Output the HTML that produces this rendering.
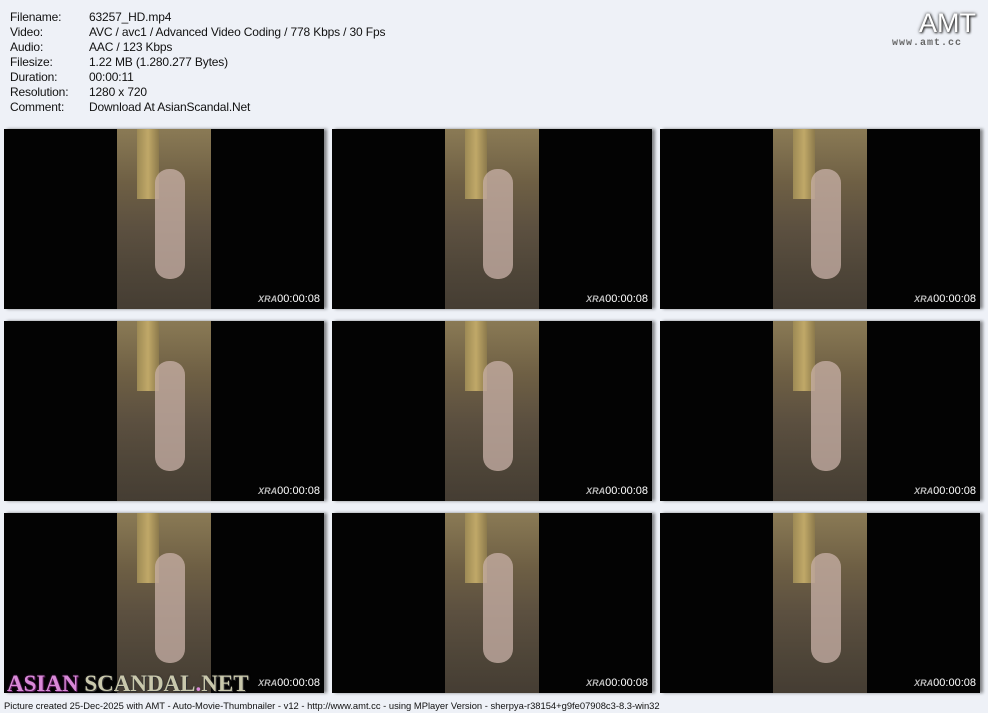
<!DOCTYPE html>
<html><head><meta charset="utf-8"><style>
body{margin:0;width:988px;height:713px;background:#eef1f7;position:relative;overflow:hidden;font-family:"Liberation Sans",sans-serif;}
.info{position:absolute;left:10px;top:10px;font-size:12px;line-height:15px;color:#111;letter-spacing:-0.15px}
.info div{white-space:nowrap}
.info span{display:inline-block;width:79px}
.t{position:absolute;width:320px;height:180px;background:#030303;box-shadow:3px 0 3px rgba(0,0,0,.45);}
.t .c{position:absolute;left:113px;top:0;width:94px;height:180px;background:linear-gradient(180deg,#8a7a55 0%,#6e5f44 30%,#5c5040 55%,#4e4538 80%,#453d33 100%);}
.t .c:before{content:"";position:absolute;left:20px;top:0;width:22px;height:70px;background:linear-gradient(90deg,#9d8a55,#c0a868,#8c7a4c);}
.t .c:after{content:"";position:absolute;left:38px;top:40px;width:30px;height:110px;border-radius:14px;background:#c9b2a8;opacity:.75}
.t .tm{position:absolute;right:4px;bottom:4px;color:#fff;font-size:11px;}
.t .tm i{color:#bbb;font-size:9px;font-weight:bold;}
.amt{position:absolute;left:919px;top:8px;font-size:27px;color:#fff;text-shadow:0 0 3px #333,1px 1px 2px #222;}
.amtu{position:absolute;left:892px;top:38px;font-size:10px;font-weight:bold;color:#666;letter-spacing:1px;font-family:"Liberation Mono",monospace}
.logo{position:absolute;left:7px;top:671px;font-family:"Liberation Serif",serif;font-weight:bold;font-size:23px;letter-spacing:0px;white-space:nowrap}
.foot{position:absolute;left:4px;top:700px;font-size:9.4px;color:#111;white-space:nowrap}
</style></head><body>
<div class="info">
<div><span>Filename:</span>63257_HD.mp4</div>
<div><span>Video:</span>AVC / avc1 / Advanced Video Coding / 778 Kbps / 30 Fps</div>
<div><span>Audio:</span>AAC / 123 Kbps</div>
<div><span>Filesize:</span>1.22 MB (1.280.277 Bytes)</div>
<div><span>Duration:</span>00:00:11</div>
<div><span>Resolution:</span>1280 x 720</div>
<div><span>Comment:</span>Download At AsianScandal.Net</div>
</div>
<div class="amt">AMT</div>
<div class="amtu">www.amt.cc</div>

<div class="t" style="left:4px;top:129px"><div class="c"></div><div class="tm"><i>XRA</i>00:00:08</div></div>
<div class="t" style="left:332px;top:129px"><div class="c"></div><div class="tm"><i>XRA</i>00:00:08</div></div>
<div class="t" style="left:660px;top:129px"><div class="c"></div><div class="tm"><i>XRA</i>00:00:08</div></div>
<div class="t" style="left:4px;top:321px"><div class="c"></div><div class="tm"><i>XRA</i>00:00:08</div></div>
<div class="t" style="left:332px;top:321px"><div class="c"></div><div class="tm"><i>XRA</i>00:00:08</div></div>
<div class="t" style="left:660px;top:321px"><div class="c"></div><div class="tm"><i>XRA</i>00:00:08</div></div>
<div class="t" style="left:4px;top:513px"><div class="c"></div><div class="tm"><i>XRA</i>00:00:08</div></div>
<div class="t" style="left:332px;top:513px"><div class="c"></div><div class="tm"><i>XRA</i>00:00:08</div></div>
<div class="t" style="left:660px;top:513px"><div class="c"></div><div class="tm"><i>XRA</i>00:00:08</div></div>

<div class="logo"><span style="color:#d98ad8;text-shadow:0 0 2px #5a1a5a,1px 1px 0 #5a1a5a">ASIAN</span> <span style="color:#c9c8ac;text-shadow:0 0 2px #333,1px 1px 0 #333">SCANDAL</span><span style="color:#d98ad8">.</span><span style="color:#c9c8ac;text-shadow:0 0 2px #333,1px 1px 0 #333">NET</span></div>
<div class="foot">Picture created 25-Dec-2025 with AMT - Auto-Movie-Thumbnailer - v12 - http://www.amt.cc - using MPlayer Version - sherpya-r38154+g9fe07908c3-8.3-win32</div>
</body></html>
